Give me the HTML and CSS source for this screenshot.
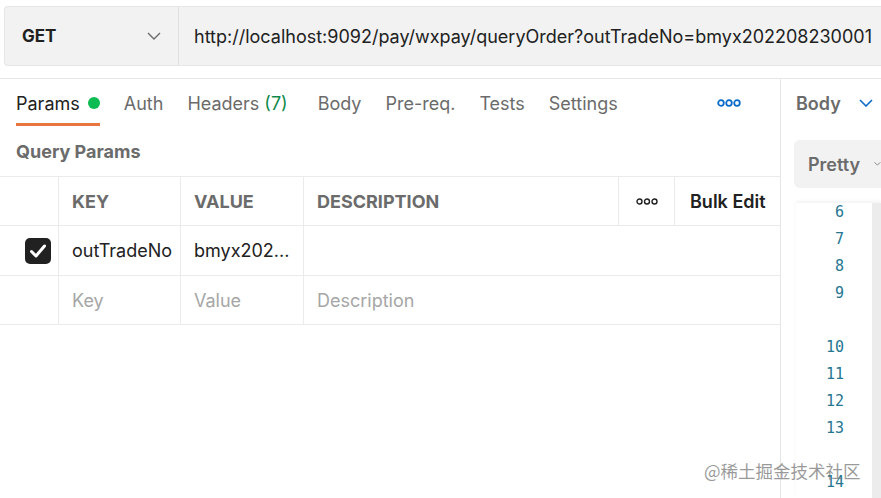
FILE: index.html
```html
<!DOCTYPE html>
<html>
<head>
<meta charset="utf-8">
<link rel="stylesheet" href="styles.css">
</head>
<body>
<div class="top">
  <div class="urlbar">
    <div class="method">
      <span class="method-name">GET</span>
      <svg class="chev" width="14" height="8" viewBox="0 0 14 8"><path d="M1 1l6 6 6-6" fill="none" stroke="#6b6b6b" stroke-width="1.4"/></svg>
    </div>
    <div class="url">http://localhost:9092/pay/wxpay/queryOrder?outTradeNo=bmyx202208230001</div>
  </div>
</div>
<div class="main">
  <div class="left">
    <div class="tabs">
      <div class="tab active">Params <span class="dot"></span></div>
      <div class="tab">Auth</div>
      <div class="tab">Headers <span class="count">(7)</span></div>
      <div class="tab">Body</div>
      <div class="tab">Pre-req.</div>
      <div class="tab">Tests</div>
      <div class="tab">Settings</div>
      <div class="more">
        <svg width="24" height="8" viewBox="0 0 24 8"><circle cx="4" cy="4" r="2.8" fill="none" stroke="#0b6bcb" stroke-width="1.8"/><circle cx="12" cy="4" r="2.8" fill="none" stroke="#0b6bcb" stroke-width="1.8"/><circle cx="20" cy="4" r="2.8" fill="none" stroke="#0b6bcb" stroke-width="1.8"/></svg>
      </div>
    </div>
    <div class="section-title">Query Params</div>
    <div class="table">
      <div class="row head">
        <div class="cell c0"></div>
        <div class="cell c1">KEY</div>
        <div class="cell c2">VALUE</div>
        <div class="cell c3">DESCRIPTION</div>
        <div class="cell c4">
          <svg width="22" height="7" viewBox="0 0 22 7"><circle cx="3.5" cy="3.5" r="2.5" fill="none" stroke="#212121" stroke-width="1.4"/><circle cx="11" cy="3.5" r="2.5" fill="none" stroke="#212121" stroke-width="1.4"/><circle cx="18.5" cy="3.5" r="2.5" fill="none" stroke="#212121" stroke-width="1.4"/></svg>
        </div>
        <div class="cell c5">Bulk Edit</div>
      </div>
      <div class="row">
        <div class="cell c0"><span class="check"><svg width="18" height="14" viewBox="0 0 18 14"><path d="M2.5 7.5l4.5 4.5 8.5-10" fill="none" stroke="#fff" stroke-width="3" stroke-linecap="round" stroke-linejoin="round"/></svg></span></div>
        <div class="cell c1 val">outTradeNo</div>
        <div class="cell c2 val">bmyx202...</div>
        <div class="cell c345"></div>
      </div>
      <div class="row">
        <div class="cell c0"></div>
        <div class="cell c1 ph">Key</div>
        <div class="cell c2 ph">Value</div>
        <div class="cell c345 ph">Description</div>
      </div>
    </div>
  </div>
  <div class="right">
    <div class="body-sel">
      <span>Body</span>
      <svg width="14" height="8" viewBox="0 0 14 8"><path d="M1 1l6 6 6-6" fill="none" stroke="#0b6bcb" stroke-width="1.6"/></svg>
    </div>
    <div class="pretty">Pretty <svg width="12" height="8" viewBox="0 0 12 8"><path d="M1 1l5 5 5-5" fill="none" stroke="#6b6b6b" stroke-width="1.4"/></svg></div>
    <div class="code">
      <div class="nums">
        <div>6</div><div>7</div><div>8</div><div>9</div><div>&nbsp;</div><div>10</div><div>11</div><div>12</div><div>13</div><div>&nbsp;</div><div>14</div>
      </div>
      <div class="scroll"></div>
    </div>
  </div>
  <div class="watermark">@稀土掘金技术社区</div>
</div>
</body>
</html>
```
FILE: styles.css
```css
* { box-sizing: border-box; }
html, body { margin: 0; padding: 0; }
body {
  width: 881px;
  height: 498px;
  overflow: hidden;
  background: #fff;
  font-family: Inter, "Noto Sans", sans-serif;
  color: #212121;
  position: relative;
}
.top {
  padding: 6px 0 0 4px;
  height: 79px;
  border-bottom: 1px solid #e6e6e6;
}
.urlbar {
  display: flex;
  height: 60px;
  background: #f2f2f2;
  border: 1px solid #e6e6e6;
  border-right: none;
  border-radius: 4px 0 0 4px;
}
.method {
  width: 174px;
  flex-shrink: 0;
  display: flex;
  align-items: center;
  justify-content: space-between;
  padding: 0 17px 0 17px;
  border-right: 1px solid #e0e0e0;
}
.method-name { font-weight: 700; font-size: 17px; }
.url {
  display: flex;
  align-items: center;
  padding-left: 15px;
  font-size: 18px;
  white-space: nowrap;
  color: #212121;
}
.main {
  display: flex;
  height: 419px;
}
.left {
  width: 781px;
  flex-shrink: 0;
  border-right: 1px solid #e6e6e6;
}
.tabs {
  display: flex;
  align-items: center;
  height: 48px;
  padding-left: 16px;
}
.tab {
  position: relative;
  font-size: 18px;
  color: #6b6b6b;
  margin-right: 24px;
  height: 48px;
  display: flex;
  align-items: center;
}
.tab:nth-child(3) { margin-right: 30px; }
.tab:nth-child(4) { margin-right: 24px; }
.tab:nth-child(5) { margin-right: 24px; }
.tab.active { color: #212121; }
.tab.active::after {
  content: "";
  position: absolute;
  left: 0; right: 0; bottom: 1px;
  height: 3px;
  background: #e8743f;
}
.dot {
  display: inline-block;
  width: 12px; height: 12px;
  border-radius: 50%;
  background: #0cbb52;
  margin-left: 8px;
}
.count { color: #0e8a4a; margin-left: 5px; }
.more { margin-left: auto; margin-right: 39px; display: flex; }
.section-title {
  font-size: 18px;
  font-weight: 700;
  color: #6b6b6b;
  height: 49px;
  display: flex;
  align-items: center;
  padding-left: 16px;
}
.table { border-top: 1px solid #ebebeb; }
.row {
  display: flex;
  height: 50px;
  border-bottom: 1px solid #ebebeb;
}
.head { height: 49px; }
.row:last-child { height: 49px; }
.cell {
  display: flex;
  align-items: center;
  font-size: 18px;
  padding-left: 13px;
  border-right: 1px solid #ebebeb;
}
.c0 { width: 59px; justify-content: flex-end; padding-right: 7px; padding-left: 0; }
.c1 { width: 122px; }
.c2 { width: 123px; }
.c3 { width: 315px; }
.c4 { width: 56px; justify-content: center; padding-left: 0; }
.c5 { flex: 1; border-right: none; padding-left: 15px; font-weight: 600; color: #212121; }
.c345 { flex: 1; border-right: none; }
.head .cell { font-weight: 700; color: #6b6b6b; }
.head .c5 { color: #212121; font-weight: 600; }
.val { color: #212121; }
.ph { color: #a6a6a6; }
.check {
  width: 26px; height: 26px;
  border-radius: 5px;
  background: #212121;
  display: flex; align-items: center; justify-content: center;
}
.right {
  flex: 1;
  min-width: 0;
  padding-left: 13px;
  display: flex;
  flex-direction: column;
  overflow: hidden;
}
.body-sel {
  height: 48px;
  display: flex;
  align-items: center;
  gap: 18px;
  padding-left: 2px;
  font-size: 18px;
  font-weight: 600;
  color: #6b6b6b;
}
.pretty {
  margin-top: 13px;
  height: 48px;
  background: #f2f2f2;
  border-radius: 6px 0 0 6px;
  display: flex;
  align-items: center;
  gap: 14px;
  padding-left: 14px;
  font-size: 18px;
  font-weight: 600;
  color: #6b6b6b;
  white-space: nowrap;
}
.code {
  margin-top: 15px;
  margin-left: 2px;
  flex: 1;
  display: flex;
  box-shadow: 0 -2px 3px rgba(0,0,0,0.05);
}
.nums {
  width: 48px;
  margin-top: -4px;
  text-align: right;
  font-family: "DejaVu Sans Mono", monospace;
  font-size: 15px;
  line-height: 27px;
  color: #267691;
}
.scroll {
  width: 9px;
  background: #ececec;
  margin-left: auto;
}
.watermark {
  position: absolute;
  left: 704px;
  top: 458px;
  font-family: "Noto Sans CJK SC", sans-serif;
  font-size: 17.5px;
  color: rgba(120,120,120,0.75);
}
```
